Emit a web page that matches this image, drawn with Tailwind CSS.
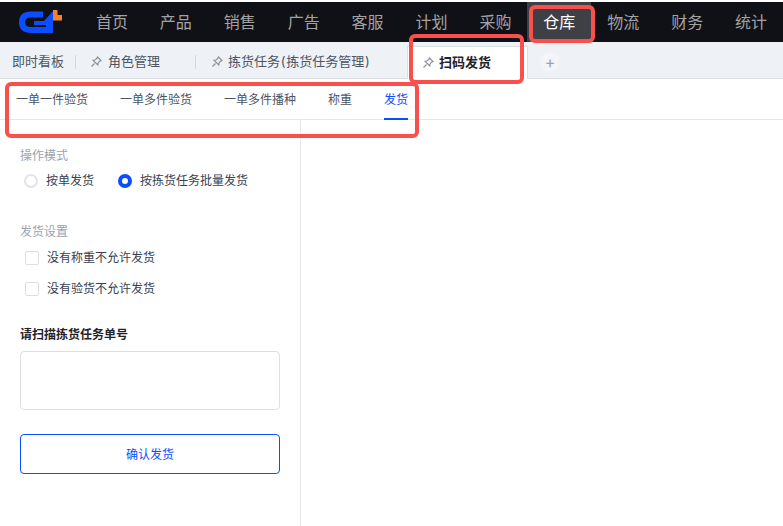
<!DOCTYPE html>
<html lang="zh">
<head>
    <meta charset="UTF-8">
    <meta name="viewport" content="width=device-width, initial-scale=1.0">
    <title>扫码发货</title>
    <script src="https://cdn.jsdelivr.net/npm/@tailwindcss/browser@4"></script>
</head>
<body class="relative h-[526px] w-[783px] overflow-hidden bg-white font-['Inter','Noto_Sans_CJK_SC',sans-serif]">
    <!-- top nav -->
    <nav class="mt-[2px] flex h-10 bg-[#101116] text-base text-[#a3a3a3]">
        <div class="flex w-20 items-center pl-[18px]">
            <svg width="46" height="40" viewBox="0 0 46 40">
                <path d="M25 12.500H13Q4 12.500 4 20.250Q4 28 13 28H30" fill="none" stroke="#0b4dff" stroke-width="6"/>
                <path d="M35 9L26 19H16v4H28v8h7z" fill="#0b4dff"/>
                <path d="M35 8h4.500v5H44v5.500H35z" fill="#f5822a"/>
            </svg>
        </div>
        <a class="flex w-16 items-center justify-center">首页</a>
        <a class="flex w-16 items-center justify-center">产品</a>
        <a class="flex w-16 items-center justify-center">销售</a>
        <a class="flex w-16 items-center justify-center">广告</a>
        <a class="flex w-16 items-center justify-center">客服</a>
        <a class="flex w-16 items-center justify-center">计划</a>
        <a class="flex w-16 items-center justify-center">采购</a>
        <a class="flex w-16 items-center justify-center bg-[#3f4045] text-white">仓库</a>
        <a class="flex w-16 items-center justify-center">物流</a>
        <a class="flex w-16 items-center justify-center">财务</a>
        <a class="flex w-16 items-center justify-center">统计</a>
    </nav>

    <!-- open tabs -->
    <div class="flex h-[37px] items-end border-b border-[#dcdfe4] bg-[#eef1f5] text-[13px] text-[#4b5563]">
        <div class="relative flex h-9 w-[76px] items-center pl-3 pt-1">
            即时看板
            <span class="absolute right-0 top-[13px] h-[14px] w-px bg-[#d5d8dd]"></span>
        </div>
        <div class="relative flex h-9 w-[120px] items-center pl-[14px] pt-1">
            <svg class="mr-[6px] size-3" viewBox="0 0 12 12" fill="#eef1f5" stroke="#8b929c" stroke-width="1.2"><path d="M7.500 1l3.500 3.500-1.800 1-1.200 1.700-.2 1.800L3 4.200l1.800-.2 1.700-1.200z M4.500 7.500L1.500 10.500"/></svg>
            角色管理
            <span class="absolute right-0 top-[13px] h-[14px] w-px bg-[#d5d8dd]"></span>
        </div>
        <div class="flex h-9 w-[211px] items-center pl-[15px] pt-1">
            <svg class="mr-[5px] size-3" viewBox="0 0 12 12" fill="#eef1f5" stroke="#8b929c" stroke-width="1.2"><path d="M7.500 1l3.500 3.500-1.800 1-1.200 1.700-.2 1.800L3 4.200l1.800-.2 1.700-1.200z M4.500 7.500L1.500 10.500"/></svg>
            <span>拣货任务<span class="px-[0.75px]">(</span>拣货任务管理<span class="px-[0.75px]">)</span></span>
        </div>
        <div class="-mb-px flex h-[33px] w-[121px] items-center border border-b-0 border-[#dcdfe4] bg-white pl-[14px] font-bold text-[#1f2329]">
            <svg class="mr-[5px] size-3" viewBox="0 0 12 12" fill="#fff" stroke="#8b929c" stroke-width="1.2"><path d="M7.500 1l3.500 3.500-1.800 1-1.200 1.700-.2 1.800L3 4.200l1.800-.2 1.700-1.200z M4.500 7.500L1.500 10.500"/></svg>
            扫码发货
        </div>
        <div class="flex h-9 w-11 items-center justify-center pt-1">
            <span class="flex size-5 items-center justify-center rounded-full bg-[#f3f5f8] text-base text-[#9ca3af]">+</span>
        </div>
    </div>

    <!-- sub tabs -->
    <div class="flex h-[41px] gap-8 border-b border-[#e5e7eb] pl-4 text-xs text-[#4b5563]">
        <a class="flex items-center pt-[2px]">一单一件验货</a>
        <a class="flex items-center pt-[2px]">一单多件验货</a>
        <a class="flex items-center pt-[2px]">一单多件播种</a>
        <a class="flex items-center pt-[2px]">称重</a>
        <a class="-mb-px flex items-center border-b-2 border-[#0b4dff] pt-[2px] text-[#0b4dff]">发货</a>
    </div>

    <div class="flex h-[406px]">
        <aside class="w-[301px] border-r border-[#e5e7eb] px-5 pt-[28px] text-xs text-[#374151]">
            <div class="text-[#9ca3af]">操作模式</div>
            <div class="mt-[9px] flex h-4 items-center">
                <span class="ml-1 size-[14px] rounded-full border-2 border-[#e2e4ea]"></span>
                <span class="ml-[8px]">按单发货</span>
                <span class="ml-6 size-[14px] rounded-full border-[4px] border-[#0b4dff]"></span>
                <span class="ml-2">按拣货任务批量发货</span>
            </div>
            <div class="mt-[35px] text-[#9ca3af]">发货设置</div>
            <label class="mt-[10px] flex h-4 items-center">
                <span class="ml-[5px] size-[14px] rounded-[2px] border border-[#dcdfe4]"></span>
                <span class="ml-2">没有称重不允许发货</span>
            </label>
            <label class="mt-[15px] flex h-4 items-center">
                <span class="ml-[5px] size-[14px] rounded-[2px] border border-[#dcdfe4]"></span>
                <span class="ml-2">没有验货不允许发货</span>
            </label>
            <div class="mt-[30px] font-bold text-[#1f2329]">请扫描拣货任务单号</div>
            <textarea class="mt-2 block h-[59px] w-[260px] resize-none rounded border border-[#dcdfe4]"></textarea>
            <button class="mt-6 h-10 w-[260px] rounded border border-[#0b4dff] pt-[2px] text-xs text-[#0b4dff]">确认发货</button>
        </aside>
    </div>

    <!-- red annotation boxes -->
    <div class="absolute left-[529px] top-[5px] h-[38px] w-[66px] rounded-md border-[4px] border-[#f9504e]"></div>
    <div class="absolute left-[409px] top-[34px] h-[50px] w-[115px] rounded-md border-[4px] border-[#f9504e]"></div>
    <div class="absolute left-[5px] top-[82px] h-[56px] w-[414px] rounded-md border-[4px] border-[#f9504e]"></div>
</body>
</html>
